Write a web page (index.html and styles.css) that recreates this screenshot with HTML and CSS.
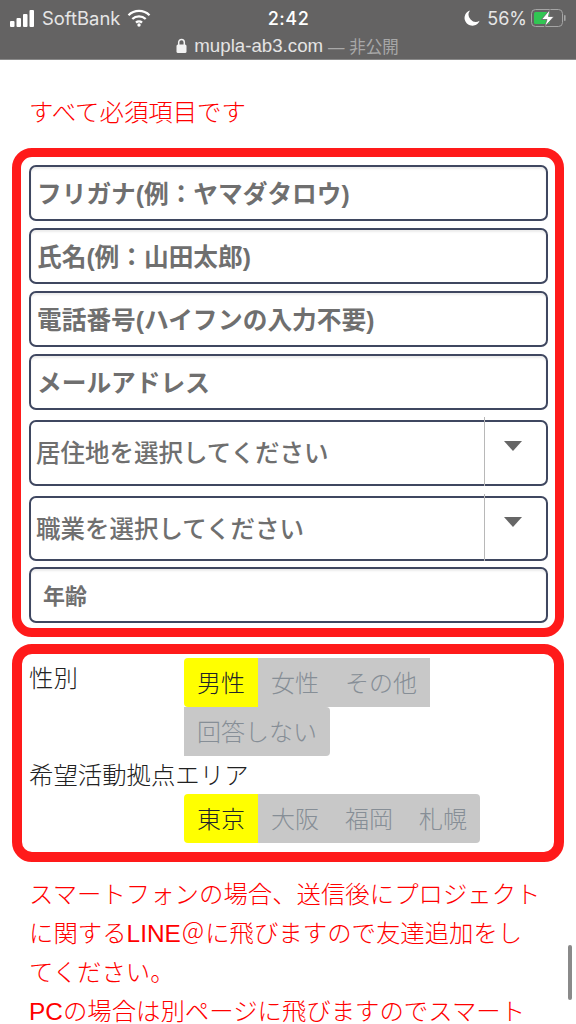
FILE: index.html
```html
<!DOCTYPE html>
<html lang="ja">
<head>
<meta charset="utf-8">
<title>mupla-ab3.com</title>
<link rel="stylesheet" href="styles.css">
</head>
<body>
<header class="status">
  <div class="status-top">
    <div class="status-left">
      <svg class="ic-signal" viewBox="0 0 25 17"><rect x="0" y="11" width="4.5" height="6" rx="1"/><rect x="6.5" y="8" width="4.5" height="9" rx="1"/><rect x="13" y="4" width="4.5" height="13" rx="1"/><rect x="19.5" y="0" width="4.5" height="17" rx="1"/></svg>
      <span class="carrier">SoftBank</span>
      <svg class="ic-wifi" viewBox="0 0 24 18"><path d="M1.5 6.2A15 15 0 0 1 22.5 6.2" /><path d="M5.3 10A9.6 9.6 0 0 1 18.7 10"/><path d="M9 13.6A4.4 4.4 0 0 1 15 13.6"/><circle cx="12" cy="16" r="1.7"/></svg>
    </div>
    <div class="clock">2:42</div>
    <div class="status-right">
      <svg class="ic-moon" viewBox="0 0 16 16"><path d="M6 .5A7.8 7.8 0 1 0 15.6 10.8 7.2 7.2 0 0 1 6 .5Z"/></svg>
      <span class="pct">56%</span>
      <svg class="ic-batt" viewBox="0 0 36 18"><rect class="b-frame" x=".5" y=".5" width="31" height="17" rx="4"/><rect class="b-cap" x="33" y="6" width="1.6" height="6" rx=".8"/><rect class="b-fill" x="3" y="3" width="16" height="12" rx="1.5"/><path class="b-bolt" d="M19 0.5 10.5 10.5H16L13.500 18 23 7.500H17.500Z"/></svg>
    </div>
  </div>
  <div class="url">
    <svg class="ic-lock" viewBox="0 0 11 15"><path class="l-shackle" d="M2.700 7V4.300a2.800 2.800 0 0 1 5.600 0V7"/><rect x=".5" y="6.500" width="10" height="8.500" rx="1.500"/></svg>
    <span class="domain">mupla-ab3.com</span>
    <span class="private">— 非公開</span>
  </div>
</header>

<main class="page">
  <p class="notice first">すべて必須項目です</p>

  <section class="box box-fields">
    <div class="field">フリガナ(例：ヤマダタロウ)</div>
    <div class="field">氏名(例：山田太郎)</div>
    <div class="field">電話番号(ハイフンの入力不要)</div>
    <div class="field">メールアドレス</div>
    <div class="field select">居住地を選択してください</div>
    <div class="field select second">職業を選択してください</div>
    <div class="field age">年齢</div>
  </section>

  <section class="box box-choices">
    <div class="choice-row">
      <div class="choice-label">性別</div>
      <div class="options">
        <span class="opt on">男性</span><span class="opt">女性</span><span class="opt">その他</span><span class="opt last">回答しない</span>
      </div>
    </div>
    <div class="area-label">希望活動拠点エリア</div>
    <div class="options area">
      <span class="opt on">東京</span><span class="opt">大阪</span><span class="opt">福岡</span><span class="opt last">札幌</span>
    </div>
  </section>

  <p class="notice lines">スマートフォンの場合、送信後にプロジェクト<br>に関するLINE＠に飛びますので友達追加をし<br>てください。<br>PCの場合は別ページに飛びますのでスマート</p>
</main>
<div class="scrollbar"></div>
</body>
</html>
```

FILE: styles.css
```css
* { box-sizing: border-box; }
html, body { margin: 0; padding: 0; }
body {
  width: 576px;
  height: 1024px;
  overflow: hidden;
  position: relative;
  background: #fff;
  font-family: "Liberation Sans", "Noto Sans CJK JP", sans-serif;
}

/* iOS status bar */
.status {
  height: 60px;
  background: #646363;
  border-bottom: 1px solid #8a8a8a;
  color: #f0f0f0;
  padding: 7px 9px 0 10px;
}
.status-top {
  display: grid;
  grid-template-columns: 1fr auto 1fr;
  align-items: center;
  height: 20px;
}
.status-left, .status-right { display: flex; align-items: center; }
.status-right { justify-content: flex-end; }
.carrier { margin-left: 7px; color: #e6e6e6; font-family: "Inter", "Liberation Sans", sans-serif; font-size: 18.400px; }
.clock { font-family: "Inter", "Liberation Sans", sans-serif; font-size: 18px; font-weight: 500; color: #fff; letter-spacing: .5px; }
.pct { font-family: "Inter", "Liberation Sans", sans-serif; font-size: 18px; margin-left: 7px; color: #e6e6e6; }
.ic-signal { width: 25px; height: 17px; fill: #fff; }
.ic-wifi { width: 24px; height: 18px; margin-left: 7px; fill: #fff; }
.ic-wifi path { fill: none; stroke: #fff; stroke-width: 2.300; }
.ic-moon { width: 16px; height: 16px; fill: #fff; }
.ic-batt { width: 36px; height: 18px; margin-left: 4px; }
.b-frame { fill: none; stroke: #a5a5a5; }
.b-cap { fill: #a5a5a5; }
.b-fill { fill: #31c653; }
.b-bolt { fill: #fff; stroke: #646363; stroke-width: .8; }
.url {
  display: flex;
  justify-content: center;
  align-items: center;
  gap: 7px;
  height: 19px;
  margin-top: 9px;
  font-size: 18.700px;
  padding-right: 2px;
}
.ic-lock { width: 11px; height: 15px; fill: #f2f2f2; }
.l-shackle { fill: none; stroke: #f2f2f2; stroke-width: 1.500; }
.domain { color: #e4e4e4; }
.private { color: #a8a8a8; margin-left: -2px; font-size: 16.500px; }

/* page */
.page { padding: 0 12px; }
.notice {
  margin: 0 0 0 17px;
  color: #ff0000;
  font-size: 24.400px;
  font-weight: 300;
}
.notice.first { padding-top: 35px; height: 88px; line-height: 35px; }
.notice.lines { margin-top: 13px; line-height: 39px; white-space: nowrap; }

.box {
  border-style: solid;
  border-color: #ff1a1a;
  border-radius: 20px;
  background: #fff;
}
.box-fields {
  border-width: 9px;
  padding: 8px 7px 4px 8px;
  height: 489px;
}
.box-choices {
  border-width: 10px;
  margin-top: 7px;
  padding: 4px 8px 0 8px;
  height: 218px;
}

.field {
  height: 56px;
  margin-bottom: 7px;
  padding: 0 0 3px 6px;
  display: flex;
  align-items: center;
  border: 2px solid #3f4760;
  border-radius: 7px;
  box-shadow: inset 0 2px 2px rgba(0, 0, 0, .08);
  font-size: 24.700px;
  font-weight: 700;
  color: #6f6f6f;
}
.select {
  position: relative;
  height: 66px;
  margin-top: 10px;
  margin-bottom: 0;
  padding-left: 5px;
  font-size: 24.500px;
  font-weight: 500;
  box-shadow: none;
}
.select.second { height: 65px; }
.select::after {
  content: "";
  position: absolute;
  left: 453px;
  top: -5px;
  bottom: -2px;
  width: 1px;
  background: #b8b8b8;
}
.select.second::after { top: -4px; }
.select::before {
  content: "";
  position: absolute;
  left: 473px;
  top: 19px;
  border-left: 9px solid transparent;
  border-right: 9px solid transparent;
  border-top: 10px solid #666;
}
.age {
  margin-top: 6px;
  margin-bottom: 0;
  padding-left: 12px;
  font-size: 22px;
}

/* choices */
.choice-row {
  display: grid;
  grid-template-columns: 154px 1fr;
}
.choice-label, .area-label {
  font-size: 24.400px;
  color: #222;
  font-weight: 300;
  margin-left: -1px;
}
.choice-label { line-height: 30px; padding-top: 6px; }
.area-label { line-height: 30px; height: 38px; padding-top: 5px; white-space: nowrap; }
.options { display: flex; flex-wrap: wrap; }
.options.area { margin-left: 154px; }
.opt {
  height: 49px;
  padding: 0 13px 2px;
  display: flex;
  align-items: center;
  background: #c8c8c8;
  color: #868e96;
  font-size: 24px;
  font-weight: 300;
}
.opt.on { background: #ffff00; color: #212529; border-radius: 4px 0 0 4px; }
.opt.last { border-radius: 0 4px 4px 0; }

.scrollbar {
  position: absolute;
  left: 568px;
  top: 945px;
  width: 4px;
  height: 55px;
  border-radius: 2px;
  background: #8a8a8a;
}
```
